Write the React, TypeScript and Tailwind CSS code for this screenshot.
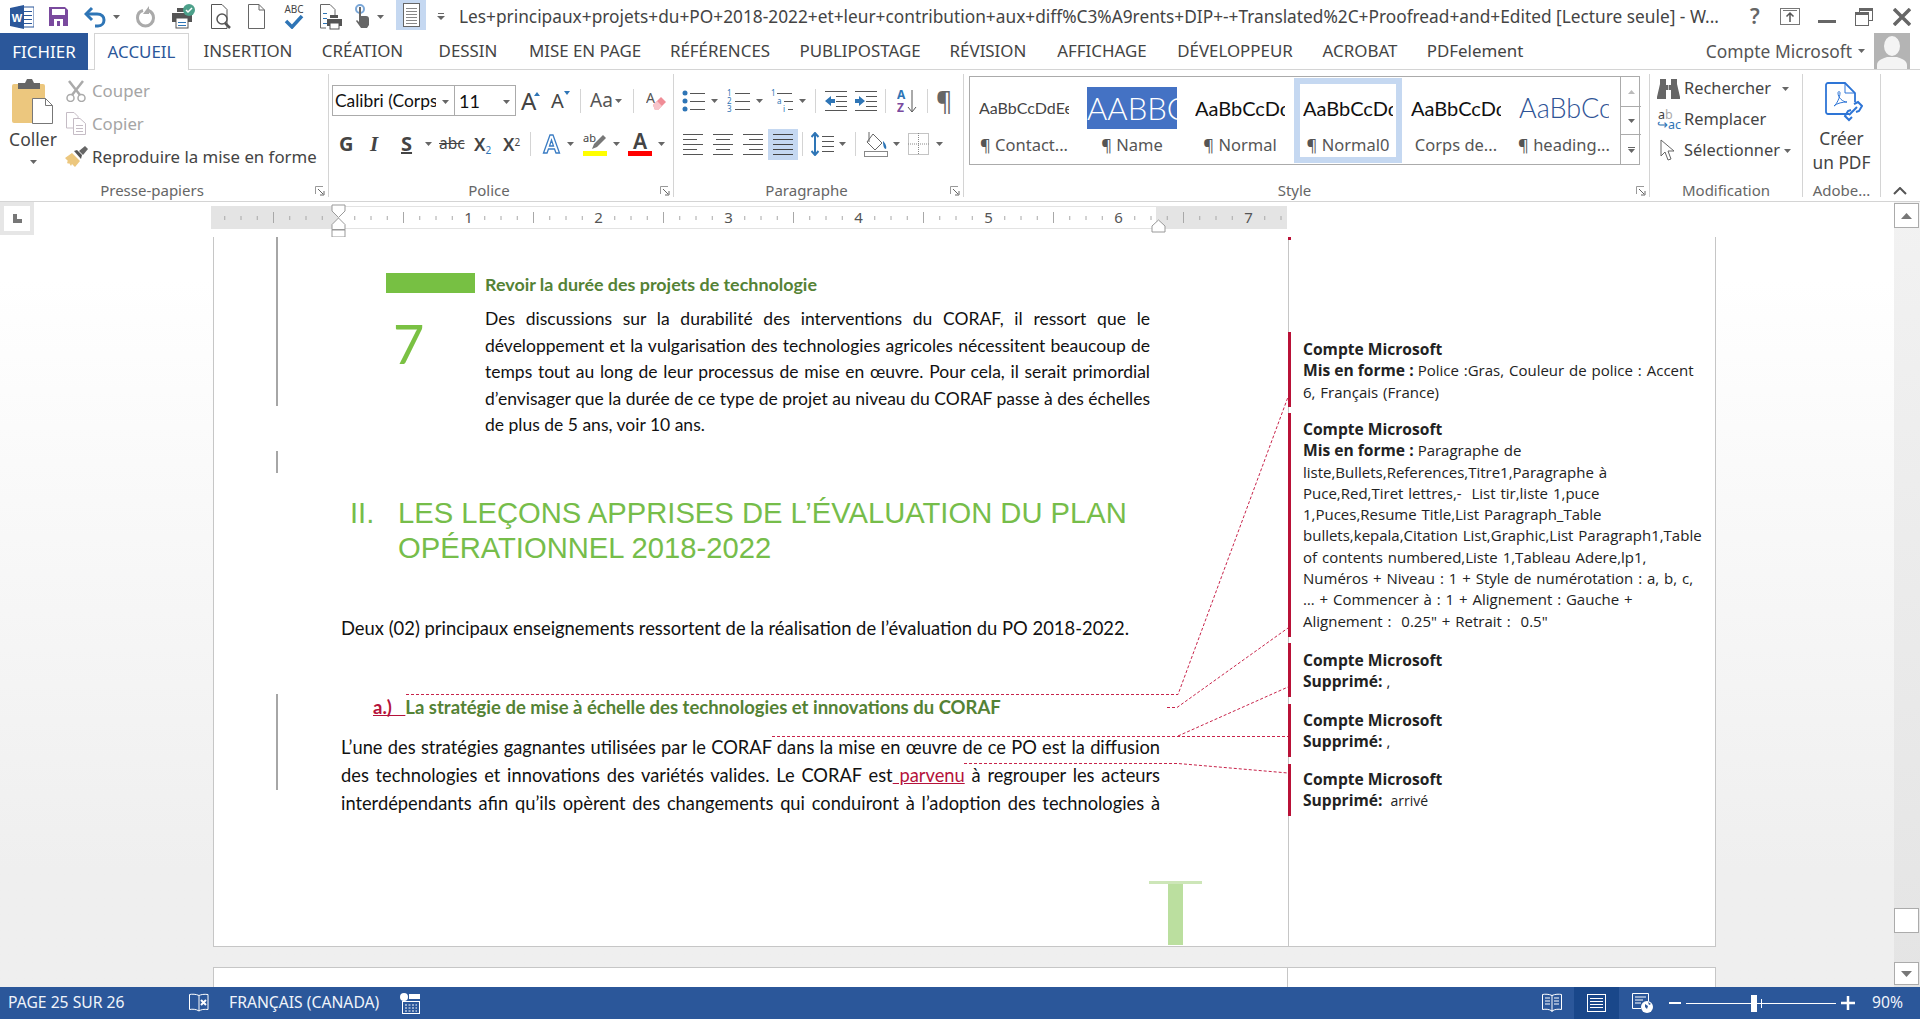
import React from "react";

const Caret = ({ c = "" }: { c?: string }) => (
  <svg width="7" height="4" viewBox="0 0 7 4" className={`shrink-0 ${c}`}><path d="M0 0h7L3.5 4z" fill="#666" /></svg>
);

const Launcher = () => (
  <svg width="10" height="10" viewBox="0 0 10 10" className="absolute right-[3px] bottom-[1px]">
    <path d="M.5 8V.5H8" fill="none" stroke="#999" />
    <path d="M3 3l5 5M9 5v4H5" fill="none" stroke="#666" />
  </svg>
);

const Tab = ({ t, c }: { t: string; c: string }) => (
  <div className={`flex items-center justify-center h-[36px] text-[#444] ${c}`}>{t}</div>
);

const Lines = ({ n, x, w, y0 = 0, gap = 5, color = "#444", sw = 1 }: { n: number; x: number; w: number; y0?: number; gap?: number; color?: string; sw?: number }) => (
  <g stroke={color} strokeWidth={sw}>
    {Array.from({ length: n }).map((_, i) => (
      <line key={i} x1={x} x2={x + w} y1={y0 + i * gap + 0.5} y2={y0 + i * gap + 0.5} />
    ))}
  </g>
);

const GroupLabel = ({ t, launcher = true }: { t: string; launcher?: boolean }) => (
  <div className={`relative h-[14px] flex items-center justify-center text-[#666] text-[15px] ${launcher ? "pr-[24px]" : ""}`}>
    {t}
    {launcher && <Launcher />}
  </div>
);

const Style = ({ sample, label, sel, sc = "" }: { sample: string; label: string; sel?: boolean; sc?: string }) => (
  <div className="relative w-[108px] h-full flex flex-col items-center shrink-0">
    <div className={`mt-[10px] h-[42px] w-[90px] overflow-hidden whitespace-nowrap flex items-center font-['Lato',sans-serif] ${sc}`}>{sample}</div>
    <div className="mt-[5px] h-[22px] flex items-center text-[16.5px] text-[#555] whitespace-nowrap">{label}</div>
    {sel && <div className="absolute inset-x-0 top-[1px] bottom-[1px] border-[6px] border-[#c5d8f1]" />}
  </div>
);

const J = ({ children }: { children: React.ReactNode }) => (
  <div className="text-justify [text-align-last:justify]">{children}</div>
);

const Comment = ({ lines, c }: { lines: React.ReactNode[]; c: string }) => (
  <div className={`-ml-px border-l-[3px] border-[#b91137] pl-[12px] text-[15px] leading-[21.3px] text-[#222] whitespace-pre [word-spacing:1px] [&_b]:text-[15.6px] [&_b]:[word-spacing:0] ${c}`}>
    {lines.map((l, i) => <div key={i}>{l}</div>)}
  </div>
);

const Ruler = () => {
  const ticks = Array.from({ length: 66 }).map((_, i) => i - 7);
  return (
    <svg width="1076" height="23" className="block overflow-visible">
      <rect x="0" y="0" width="1076" height="23" fill="#fff" />
      <rect x="0" y="0" width="1076" height="1" fill="#e3e3e3" />
      <rect x="0" y="22" width="1076" height="1" fill="#e3e3e3" />
      <rect x="0" y="0" width="127" height="23" fill="#e4e4e4" />
      <rect x="945" y="0" width="131" height="23" fill="#e4e4e4" />
      {ticks.map((i) => {
        const x = 127.5 + i * 16.25;
        if (i % 8 === 0) return null;
        if (x < 4 || x > 1072) return null;
        const big = i % 4 === 0;
        return <line key={i} x1={x} x2={x} y1={big ? 6 : 10} y2={big ? 17 : 14} stroke="#a8a8a8" strokeWidth="1" />;
      })}
      {[1, 2, 3, 4, 5, 6, 7].map((n) => (
        <text key={n} x={127.5 + n * 130} y="17" textAnchor="middle" fontSize="15" fill="#555" fontFamily="Noto Sans, sans-serif">{n}</text>
      ))}
      <path d="M121 -1h13v6l-6.5 6.5L121 5z" fill="#fff" stroke="#999" />
      <path d="M127.500 12l6.500 6.500v5h-13v-5z" fill="#fff" stroke="#999" />
      <rect x="121" y="24" width="13" height="7" fill="#fff" stroke="#999" />
      <path d="M941 26v-6l6.500-6 6.500 6v6z" fill="#fff" stroke="#999" />
    </svg>
  );
};

const commentA = [
  <b key="a">Compte Microsoft</b>,
  <><b>Mis en forme : </b>Police :Gras, Couleur de police : Accent</>,
  "6, Français (France)",
];
const commentB = [
  <b key="a">Compte Microsoft</b>,
  <><b>Mis en forme : </b>Paragraphe de</>,
  "liste,Bullets,References,Titre1,Paragraphe à",
  "Puce,Red,Tiret lettres,-  List tir,liste 1,puce",
  "1,Puces,Resume Title,List Paragraph_Table",
  "bullets,kepala,Citation List,Graphic,List Paragraph1,Table",
  "of contents numbered,Liste 1,Tableau Adere,lp1,",
  "Numéros + Niveau : 1 + Style de numérotation : a, b, c,",
  "… + Commencer à : 1 + Alignement : Gauche +",
  "Alignement :  0.25\" + Retrait :  0.5\"",
];

export default function App() {
  return (
    <div className="w-[1920px] h-[1019px] overflow-hidden flex flex-col bg-white font-['Noto_Sans',sans-serif]">
      {/* Title bar */}
      <div className="h-[33px] shrink-0 flex items-center pl-[10px] text-[#444]">
        <svg width="24" height="24" viewBox="0 0 24 24" className="shrink-0">
          <rect x="9" y="2" width="15" height="20" fill="#fff" stroke="#2b579a" />
          <Lines n={4} x={14} w={8} y0={6} gap={4} color="#2b579a" />
          <path d="M0 3l14-3v24L0 21z" fill="#2b579a" />
          <text x="7" y="16.500" textAnchor="middle" fontSize="11" fontWeight="700" fill="#fff" fontFamily="Liberation Sans, sans-serif">W</text>
        </svg>
        <svg width="19" height="19" viewBox="0 0 19 19" className="ml-[15px] shrink-0">
          <path d="M0 0h16l3 3v16H0z" fill="#7a4a9e" />
          <rect x="3" y="2" width="13" height="6" fill="#fff" />
          <rect x="5" y="12" width="9" height="7" fill="#fff" />
          <rect x="8" y="14" width="3" height="5" fill="#7a4a9e" />
        </svg>
        <svg width="22" height="22" viewBox="0 0 22 22" className="ml-[16px] shrink-0">
          <path d="M8 2L2 8l6 6" fill="none" stroke="#2e75b6" strokeWidth="3" />
          <path d="M3 8h10c5 0 7 3 7 6s-2 6-6 6h-3" fill="none" stroke="#2e75b6" strokeWidth="3" />
        </svg>
        <Caret c="ml-[7px]" />
        <svg width="19" height="22" viewBox="0 0 19 22" className="ml-[16px] shrink-0">
          <path d="M7 4.500C3 5.500 1.500 9 1.500 12a8 8 0 0 0 16 0c0-3-1.500-6-5-7.500" fill="none" stroke="#aaa" strokeWidth="3" />
          <path d="M13 0v8h-6z" fill="#aaa" />
        </svg>
        <svg width="23" height="26" viewBox="0 0 23 26" className="ml-[17px] shrink-0">
          <path d="M5 8V4h10v4M0 9h20v9H0z" fill="#555" />
          <rect x="4" y="14" width="12" height="10" fill="#fff" stroke="#555" />
          <circle cx="17" cy="6" r="6" fill="#4ca08a" />
          <path d="M14 6l2 2 4-4" stroke="#fff" fill="none" strokeWidth="1.500" />
          <Lines n={2} x={6} w={8} y0={18} gap={3} color="#2e75b6" />
        </svg>
        <svg width="20" height="26" viewBox="0 0 20 26" className="ml-[16px] shrink-0">
          <path d="M.5.500H11l5 5v19H.5z" fill="#fff" stroke="#555" />
          <circle cx="11" cy="15" r="5" fill="#fff" stroke="#555" strokeWidth="1.500" />
          <path d="M14 19l5 5" stroke="#555" strokeWidth="2.500" />
        </svg>
        <svg width="17" height="25" viewBox="0 0 17 25" className="ml-[17px] shrink-0">
          <path d="M.5.500H11l5.500 5.500v18.500H.5z" fill="#fff" stroke="#666" />
          <path d="M11 .5v5.500h5.500" fill="none" stroke="#666" />
        </svg>
        <div className="ml-[19px] w-[20px] h-[26px] flex flex-col items-center shrink-0">
          <span className="text-[10px] leading-[11px] text-[#444]">ABC</span>
          <svg width="20" height="14" viewBox="0 0 20 14"><path d="M2 6l6 6L18 1" fill="none" stroke="#2e75b6" strokeWidth="3.500" /></svg>
        </div>
        <svg width="22" height="26" viewBox="0 0 22 26" className="ml-[16px] shrink-0">
          <path d="M.5.500H10l5 5V12M.5.500V24H6" fill="#fff" stroke="#666" />
          <Lines n={3} x={3} w={4} y0={9} gap={5} color="#2e75b6" />
          <path d="M10 14V11h8v3M7 15h15v7H7z" fill="#555" />
          <rect x="10" y="19" width="9" height="6" fill="#fff" stroke="#555" />
        </svg>
        <svg width="16" height="26" viewBox="0 0 16 26" className="ml-[12px] shrink-0">
          <circle cx="6" cy="5" r="4" fill="none" stroke="#7aa7d8" strokeWidth="2" />
          <path d="M5 3h2v9h5c2 0 3 1 3 3v6l-2 3H7l-5-7 1-1 2 2z" fill="#666" />
        </svg>
        <Caret c="ml-[7px]" />
        <div className="ml-[12px] w-[30px] h-[30px] self-start flex items-center justify-center bg-[#c5d8f1] shrink-0">
          <svg width="17" height="24" viewBox="0 0 17 24">
            <rect x=".5" y=".5" width="16" height="23" fill="#fff" stroke="#666" />
            <Lines n={6} x={3} w={11} y0={5} gap={3} color="#888" />
          </svg>
        </div>
        <svg width="8" height="8" viewBox="0 0 8 8" className="ml-[11px] shrink-0"><path d="M1 .5h6" stroke="#666" /><path d="M0 3h8L4 7z" fill="#666" /></svg>
        <div className="ml-[14px] w-[1262px] shrink-0 whitespace-nowrap text-[17.3px] text-[#444]">
          Les+principaux+projets+du+PO+2018-2022+et+leur+contribution+aux+diff%C3%A9rents+DIP+-+Translated%2C+Proofread+and+Edited [Lecture seule] - W...
        </div>
        <span className="ml-[29px] text-[21px] font-semibold text-[#666] leading-none">?</span>
        <svg width="20" height="17" viewBox="0 0 20 17" className="ml-[20px] shrink-0">
          <rect x=".5" y=".5" width="19" height="16" fill="none" stroke="#777" />
          <path d="M3 2.500h14" stroke="#777" />
          <path d="M10 5v9M6.500 8.500L10 5l3.500 3.500" fill="none" stroke="#555" strokeWidth="1.500" />
        </svg>
        <div className="ml-[18px] w-[18px] h-[3px] bg-[#666] mt-[10px] shrink-0" />
        <svg width="18" height="18" viewBox="0 0 18 18" className="ml-[19px] shrink-0">
          <rect x="4.500" y=".5" width="13" height="12" fill="none" stroke="#666" />
          <rect x=".5" y="4.500" width="13" height="13" fill="#fff" stroke="#666" />
          <rect x="0" y="4" width="14" height="3" fill="#666" />
          <rect x="4" y="0" width="14" height="3" fill="#666" />
        </svg>
        <svg width="18" height="18" viewBox="0 0 18 18" className="ml-[20px] shrink-0"><path d="M1 1l16 16M17 1L1 17" stroke="#666" strokeWidth="3.500" /></svg>
      </div>

      {/* Tabs */}
      <div className="h-[37px] shrink-0 flex border-b border-[#d4d4d4] text-[16.9px] whitespace-nowrap">
        <div className="w-[88px] h-[37px] mr-[6px] flex items-center justify-center bg-[#2b579a] text-white">FICHIER</div>
        <div className="w-[95px] h-[37px] flex items-center justify-center bg-white border border-b-0 border-[#d4d4d4] text-[#2b579a]">ACCUEIL</div>
        <Tab t="INSERTION" c="w-[118px]" />
        <Tab t="CRÉATION" c="w-[111px]" />
        <Tab t="DESSIN" c="w-[100px]" />
        <Tab t="MISE EN PAGE" c="w-[134px]" />
        <Tab t="RÉFÉRENCES" c="w-[136px]" />
        <Tab t="PUBLIPOSTAGE" c="w-[144px]" />
        <Tab t="RÉVISION" c="w-[112px]" />
        <Tab t="AFFICHAGE" c="w-[116px]" />
        <Tab t="DÉVELOPPEUR" c="w-[150px]" />
        <Tab t="ACROBAT" c="w-[100px]" />
        <Tab t="PDFelement" c="w-[130px]" />
        <div className="ml-auto flex items-center h-[36px] text-[17.4px] text-[#555]">
          Compte Microsoft
          <Caret c="ml-[6px]" />
          <div className="ml-[9px] mr-[10px] w-[36px] h-[36px] bg-[#b4b4b4] overflow-hidden shrink-0">
            <svg width="36" height="36" viewBox="0 0 36 36">
              <ellipse cx="18" cy="13" rx="8" ry="10" fill="#f4f4f4" />
              <path d="M3 36v-4c0-5 7-7 10-8h10c3 1 10 3 10 8v4z" fill="#f4f4f4" />
            </svg>
          </div>
        </div>
      </div>

      {/* Ribbon */}
      <div className="h-[132px] shrink-0 flex border-b border-[#d4d4d4] text-[#444]">
        {/* Clipboard */}
        <div className="w-[329px] h-[123px] mt-[4px] border-r border-[#d4d4d4] flex flex-col shrink-0">
          <div className="h-[100px] flex">
            <div className="w-[66px] flex flex-col items-center shrink-0">
              <svg width="42" height="45" viewBox="0 0 42 45" className="mt-[5px]">
                <rect x="0" y="5" width="33" height="39" rx="2" fill="#ecc77e" />
                <path d="M6 4h7l2-4h5l2 4h6v6H6z" fill="#666" />
                <path d="M20.500 19.500h13l7 7v18h-20z" fill="#fff" stroke="#777" />
                <path d="M33.500 19.500v7h7" fill="none" stroke="#777" />
              </svg>
              <div className="mt-[4px] text-[17.5px] leading-[22px] text-[#444]">Coller</div>
              <Caret c="mt-[10px]" />
            </div>
            <div className="flex flex-col">
              <div className="h-[33px] flex items-center text-[16.8px] text-[#a5a5a5]">
                <svg width="20" height="22" viewBox="0 0 20 22" className="w-[20px] mr-[6px]">
                  <path d="M3 1l11 14M17 1L6 15" stroke="#aaa" strokeWidth="2.500" />
                  <circle cx="4.500" cy="18" r="3.500" fill="#fff" stroke="#aaa" strokeWidth="1.500" />
                  <circle cx="15.500" cy="18" r="3.500" fill="#fff" stroke="#aaa" strokeWidth="1.500" />
                </svg>
                Couper
              </div>
              <div className="h-[33px] flex items-center text-[16.8px] text-[#a5a5a5]">
                <svg width="20" height="23" viewBox="0 0 20 23" className="w-[20px] mr-[6px]">
                  <path d="M.5.500H8l4 4V16H.5z" fill="#fff" stroke="#c5bcc5" />
                  <path d="M7.500 6.500H14l5.500 5v11h-12z" fill="#fff" stroke="#c5bcc5" />
                  <Lines n={3} x={10} w={7} y0={13} gap={3} color="#c5bcc5" />
                </svg>
                Copier
              </div>
              <div className="h-[33px] flex items-center text-[16.8px] text-[#444] whitespace-nowrap">
                <svg width="23" height="21" viewBox="0 0 23 21" className="w-[23px] mr-[4px] -ml-px">
                  <path d="M0 12l7-5 8 8-5 6-3-3-1 2-2-3-1 1-1-2 1-1z" fill="#ecc77e" />
                  <path d="M9 5l3-1 5 5-1 4z" fill="#555" />
                  <path d="M14 5l6-5 3 3-5 6z" fill="#666" />
                </svg>
                Reproduire la mise en forme
              </div>
            </div>
          </div>
          <div className="mt-auto"><GroupLabel t="Presse-papiers" /></div>
        </div>

        {/* Font */}
        <div className="w-[345px] h-[123px] mt-[4px] border-r border-[#d4d4d4] flex flex-col shrink-0">
          <div className="mt-[11px] h-[31px] flex items-center pl-[3px]">
            <div className="w-[123px] h-[31px] border border-[#ababab] flex items-center pl-[2px] pr-[5px] pt-[2px] text-[17.4px] text-[#111] shrink-0">
              <span className="w-[101px] overflow-hidden whitespace-nowrap font-['Lato',sans-serif]">Calibri (Corps</span>
              <Caret c="ml-auto" />
            </div>
            <div className="w-[61px] h-[31px] border border-l-0 border-[#ababab] flex items-center pl-[4px] pr-[5px] pt-[2px] text-[18px] text-[#111] shrink-0 font-['Lato',sans-serif]">
              11<Caret c="ml-auto" />
            </div>
            <div className="ml-[5px] w-[19px] relative text-[24px] leading-none text-[#444] shrink-0">A<svg width="6" height="4" className="absolute right-0 top-[3px]"><path d="M0 4h6L3 0z" fill="#2e75b6" /></svg></div>
            <div className="ml-[11px] w-[19px] relative text-[20px] leading-none text-[#444] shrink-0">A<svg width="6" height="4" className="absolute right-0 top-[0px]"><path d="M0 0h6L3 4z" fill="#2e75b6" /></svg></div>
            <div className="ml-[10px] w-px h-[24px] bg-[#d4d4d4]" />
            <div className="ml-[9px] text-[19px] text-[#555] leading-none">Aa</div>
            <Caret c="ml-[2px]" />
            <div className="ml-[11px] w-px h-[24px] bg-[#d4d4d4]" />
            <svg width="20" height="24" viewBox="0 0 20 24" className="ml-[12px] shrink-0">
              <text x="0" y="14" fontSize="14" fill="#555" fontFamily="Noto Sans, sans-serif">A</text>
              <path d="M7 16l8-8 5 5-8 8H9z" fill="#f08c96" />
              <path d="M7 16l4-4 5 5-4 4H9z" fill="#f7c4ca" />
            </svg>
          </div>
          <div className="mt-[12px] h-[32px] flex items-center pl-[10px] text-[#444]">
            <span className="w-[15px] text-[20px] font-bold leading-none shrink-0">G</span>
            <span className="ml-[16px] w-[12px] text-[21px] font-bold italic leading-none font-['Liberation_Serif',serif] shrink-0">I</span>
            <span className="ml-[19px] w-[12px] text-[20px] font-bold underline leading-none shrink-0">S</span>
            <Caret c="ml-[12px]" />
            <span className="ml-[7px] w-[24px] text-[15.5px] line-through leading-none shrink-0">abc</span>
            <span className="ml-[11px] w-[18px] text-[18px] font-semibold leading-none shrink-0 whitespace-nowrap">X<sub className="text-[10px] text-[#2e75b6] font-normal">2</sub></span>
            <span className="ml-[11px] w-[19px] text-[18px] font-semibold leading-none shrink-0 whitespace-nowrap">X<sup className="text-[10px] font-normal">2</sup></span>
            <div className="ml-[8px] w-px h-[24px] bg-[#d4d4d4]" />
            <svg width="19" height="22" viewBox="0 0 19 22" className="ml-[11px] shrink-0">
              <path d="M1.500 20L8 2h3l6.500 18h-3.500l-1.500-4H6.500L5 20zM7.500 13h4L9.500 7z" fill="#fff" stroke="#3a7cc3" strokeWidth="1.300" />
            </svg>
            <Caret c="ml-[6px]" />
            <div className="ml-[9px] w-[24px] flex flex-col shrink-0">
              <svg width="24" height="18" viewBox="0 0 24 18">
                <text x="0" y="10" fontSize="11" fill="#444" fontFamily="Noto Sans, sans-serif">ab</text>
                <path d="M9 17l2-5 9-9 3 3-9 9z" fill="#777" />
              </svg>
              <div className="h-[5px] w-[24px] bg-[#ffff00] mt-[1px]" />
            </div>
            <Caret c="ml-[6px]" />
            <div className="ml-[8px] w-[24px] flex flex-col items-center shrink-0">
              <span className="text-[21px] font-semibold leading-[18px] text-[#444]">A</span>
              <div className="h-[5px] w-[24px] bg-[#ff0000] mt-[1px]" />
            </div>
            <Caret c="ml-[6px]" />
          </div>
          <div className="mt-auto"><GroupLabel t="Police" /></div>
        </div>

        {/* Paragraph */}
        <div className="w-[290px] h-[123px] mt-[4px] border-r border-[#d4d4d4] flex flex-col shrink-0">
          <div className="mt-[11px] h-[31px] flex items-center pl-[8px]">
            <svg width="23" height="24" viewBox="0 0 23 24" className="shrink-0">
              <circle cx="3" cy="4" r="2.500" fill="#2e75b6" /><circle cx="3" cy="12" r="2.500" fill="#2e75b6" /><circle cx="3" cy="20" r="2.500" fill="#2e75b6" />
              <Lines n={3} x={8} w={15} y0={4} gap={8} color="#555" />
            </svg>
            <Caret c="ml-[6px]" />
            <svg width="23" height="24" viewBox="0 0 23 24" className="ml-[9px] shrink-0">
              <text x="0" y="7" fontSize="8" fill="#2e75b6">1</text><text x="0" y="15" fontSize="8" fill="#2e75b6">2</text><text x="0" y="23" fontSize="8" fill="#2e75b6">3</text>
              <Lines n={3} x={8} w={15} y0={4} gap={8} color="#555" />
            </svg>
            <Caret c="ml-[6px]" />
            <svg width="23" height="24" viewBox="0 0 23 24" className="ml-[8px] shrink-0">
              <text x="0" y="7" fontSize="8" fill="#2e75b6">1</text><text x="6" y="15" fontSize="8" fill="#2e75b6">a</text><text x="12" y="23" fontSize="8" fill="#2e75b6">i</text>
              <path d="M6 4.500h15M13 12.500h9M17 20.500h5" stroke="#555" />
            </svg>
            <Caret c="ml-[5px]" />
            <div className="ml-[9px] w-px h-[24px] bg-[#d4d4d4]" />
            <svg width="22" height="22" viewBox="0 0 22 22" className="ml-[9px] shrink-0">
              <Lines n={2} x={0} w={22} y0={1} gap={19} color="#555" />
              <Lines n={3} x={11} w={11} y0={6} gap={5} color="#555" />
              <path d="M0 11l6-5v3h4v4H6v3z" fill="#2e75b6" />
            </svg>
            <svg width="22" height="22" viewBox="0 0 22 22" className="ml-[8px] shrink-0">
              <Lines n={2} x={0} w={22} y0={1} gap={19} color="#555" />
              <Lines n={3} x={11} w={11} y0={6} gap={5} color="#555" />
              <path d="M10 11L4 6v3H0v4h4v3z" fill="#2e75b6" />
            </svg>
            <div className="ml-[8px] w-px h-[24px] bg-[#d4d4d4]" />
            <svg width="20" height="26" viewBox="0 0 20 26" className="ml-[11px] shrink-0">
              <text x="0" y="11" fontSize="12" fontWeight="700" fill="#2e75b6" fontFamily="Noto Sans, sans-serif">A</text>
              <text x="0" y="24" fontSize="12" fontWeight="700" fill="#7a4a9e" fontFamily="Noto Sans, sans-serif">Z</text>
              <path d="M15 2v21M11 19l4 5 4-5" fill="none" stroke="#555" />
            </svg>
            <div className="ml-[10px] w-px h-[24px] bg-[#d4d4d4]" />
            <span className="ml-[8px] w-[18px] text-[25px] leading-none text-[#666] shrink-0">¶</span>
          </div>
          <div className="mt-[12px] h-[32px] flex items-center pl-[9px]">
            <svg width="20" height="22" viewBox="0 0 20 22" className="shrink-0"><path d="M0 1.500h20M0 6.500h14M0 11.500h20M0 16.500h14M0 21.500h20" stroke="#555" /></svg>
            <svg width="20" height="22" viewBox="0 0 20 22" className="ml-[10px] shrink-0"><path d="M0 1.500h20M3 6.500h14M0 11.500h20M3 16.500h14M0 21.500h20" stroke="#555" /></svg>
            <svg width="20" height="22" viewBox="0 0 20 22" className="ml-[10px] shrink-0"><path d="M0 1.500h20M6 6.500h14M0 11.500h20M6 16.500h14M0 21.500h20" stroke="#555" /></svg>
            <div className="ml-[5px] w-[30px] h-[31px] bg-[#c5d8f1] flex items-center justify-center shrink-0">
              <svg width="20" height="22" viewBox="0 0 20 22"><path d="M0 1.500h20M0 6.500h20M0 11.500h20M0 16.500h20M0 21.500h20" stroke="#444" /></svg>
            </div>
            <div className="ml-[4px] w-px h-[24px] bg-[#d4d4d4]" />
            <svg width="23" height="24" viewBox="0 0 23 24" className="ml-[8px] shrink-0">
              <path d="M4 1v22M.5 5L4 1l3.500 4M.5 19L4 23l3.500-4" fill="none" stroke="#2e75b6" strokeWidth="2" />
              <Lines n={4} x={11} w={12} y0={4} gap={5} color="#555" />
            </svg>
            <Caret c="ml-[5px]" />
            <div className="ml-[9px] w-px h-[24px] bg-[#d4d4d4]" />
            <svg width="24" height="26" viewBox="0 0 24 26" className="ml-[8px] shrink-0">
              <path d="M9 3l9 9-7 7-8-8z" fill="#fff" stroke="#666" />
              <path d="M5 1v10" stroke="#666" />
              <path d="M19 10c2 2 4 5 3 8-2 0-3-3-3-8z" fill="#2e75b6" />
              <rect x=".5" y="20.500" width="23" height="5" fill="#fff" stroke="#888" />
            </svg>
            <Caret c="ml-[5px]" />
            <svg width="21" height="22" viewBox="0 0 21 22" className="ml-[8px] shrink-0">
              <rect x=".5" y=".5" width="20" height="21" fill="none" stroke="#888" strokeDasharray="1 1" />
              <path d="M10.500 0v22M0 11h21" stroke="#888" strokeDasharray="1 1" />
            </svg>
            <Caret c="ml-[7px]" />
          </div>
          <div className="mt-auto"><GroupLabel t="Paragraphe" /></div>
        </div>

        {/* Styles */}
        <div className="w-[686px] h-[123px] mt-[4px] border-r border-[#d4d4d4] flex flex-col shrink-0">
          <div className="ml-[5px] mt-[2px] w-[671px] h-[89px] border border-[#ababab] flex shrink-0">
            <Style sample="AaBbCcDdEe" label="¶ Contact..." sc="text-[16px] text-[#444]" />
            <div className="relative w-[108px] h-full flex flex-col items-center shrink-0">
              <div className="mt-[10px] h-[42px] w-[90px] overflow-hidden whitespace-nowrap flex items-center justify-start bg-[#4472c4] text-white text-[31px] font-['Lato',sans-serif] font-light">AABBCC</div>
              <div className="mt-[5px] h-[22px] flex items-center text-[16.5px] text-[#555]">¶ Name</div>
            </div>
            <Style sample="AaBbCcDdEe" label="¶ Normal" sc="text-[20px] text-[#111]" />
            <Style sample="AaBbCcDdEe" label="¶ Normal0" sel sc="text-[20px] text-[#111]" />
            <Style sample="AaBbCcDdEe" label="Corps de..." sc="text-[20px] text-[#111]" />
            <Style sample="AaBbCcDdEe" label="¶ heading..." sc="text-[27px] font-light text-[#2f5496]" />
            <div className="ml-[2px] w-[21px] h-full border-l border-[#ababab] flex flex-col shrink-0">
              <div className="h-[30px] border-b border-[#ababab] flex items-center justify-center"><svg width="7" height="4"><path d="M0 4h7L3.500 0z" fill="#bbb" /></svg></div>
              <div className="h-[28px] border-b border-[#ababab] flex items-center justify-center"><Caret /></div>
              <div className="flex-1 flex flex-col items-center justify-center gap-[1px]"><div className="w-[7px] h-px bg-[#666]" /><Caret /></div>
            </div>
          </div>
          <div className="mt-auto"><GroupLabel t="Style" /></div>
        </div>

        {/* Find */}
        <div className="w-[153px] h-[123px] mt-[4px] border-r border-[#d4d4d4] flex flex-col shrink-0 pl-[7px] text-[16.4px] text-[#444] whitespace-nowrap">
          <div className="-mt-[1px] h-[31px] flex items-center">
            <svg width="23" height="21" viewBox="0 0 23 21" className="mr-[4px] shrink-0">
              <path d="M3 1h6v6h5V1h6v5l3 13v2h-9v-9h-5v9H0v-2L3 6z" fill="#666" />
              <path d="M11.500 0v21" stroke="#fff" strokeWidth=".6" />
            </svg>
            Rechercher<Caret c="ml-[11px]" />
          </div>
          <div className="h-[31px] flex items-center">
            <div className="w-[23px] mr-[4px] leading-[10px] text-[12.5px] shrink-0">
              <div className="pl-[1px]">a<span className="text-[#aaa]">b</span></div>
              <div className="text-[#2e75b6]">↪ac</div>
            </div>
            Remplacer
          </div>
          <div className="h-[31px] flex items-center">
            <svg width="18" height="23" viewBox="0 0 18 23" className="ml-[3px] mr-[6px] shrink-0">
              <path d="M1 1v16l4-4 3 8 3-1-3-8h6z" fill="#fff" stroke="#666" />
            </svg>
            Sélectionner<Caret c="ml-[4px]" />
          </div>
          <div className="mt-auto -ml-[7px]"><GroupLabel t="Modification" launcher={false} /></div>
        </div>

        {/* Adobe */}
        <div className="w-[78px] h-[123px] mt-[4px] border-r border-[#d4d4d4] flex flex-col items-center shrink-0 text-[17.3px] text-[#444]">
          <svg width="38" height="43" viewBox="0 0 38 43" className="mt-[8px] shrink-0 ml-[5px]">
            <path d="M24 32H3a2 2 0 0 1-2-2V3a2 2 0 0 1 2-2h17l10 10v9" fill="none" stroke="#2e75d6" strokeWidth="1.800" />
            <path d="M20 1v10h10" fill="none" stroke="#2e75d6" strokeWidth="1" />
            <path d="M9 24c3-2 6-9 6-13 0-2-2-2-2 0 0 5 5 9 9 9-4 0-10 1-13 4z" fill="none" stroke="#2e75d6" strokeWidth="1" />
            <path d="M29 22l4-2 4 4-3 5-3 1M27 35l-3 3-4-4 3-5 3-1M24 33l8-8" fill="none" stroke="#2e75d6" strokeWidth="2" />
          </svg>
          <div className="mt-[2px] leading-[24px]">Créer</div>
          <div className="leading-[24px]">un PDF</div>
          <div className="mt-auto"><GroupLabel t="Adobe..." launcher={false} /></div>
        </div>
        <div className="flex-1 flex items-end justify-center pb-[6px] pr-[2px]">
          <svg width="14" height="8" viewBox="0 0 14 8"><path d="M1 7l6-6 6 6" fill="none" stroke="#555" strokeWidth="2" /></svg>
        </div>
      </div>

      {/* Workspace */}
      <div className="flex-1 min-h-0 flex bg-gradient-to-b from-white from-10% to-[#efefef] to-85%">
        <div className="w-[1894px] shrink-0 flex flex-col overflow-hidden">
          {/* Ruler row */}
          <div className="h-[35px] shrink-0 flex">
            <div className="w-[34px] h-[33px] bg-[#e6e6e6] p-[4px] shrink-0">
              <div className="w-full h-full bg-white flex items-center justify-center">
                <div className="w-[9px] h-[9px] border-l-[4px] border-b-[4px] border-[#777]" />
              </div>
            </div>
            <div className="ml-[177px] mt-[4px]"><Ruler /></div>
          </div>
          {/* Page */}
          <div className="relative ml-[213px] w-[1503px] h-[710px] shrink-0 bg-white border-x border-b border-[#c6c6c6] flex">
            <div className="w-[1074px] shrink-0 flex flex-col text-[#111] font-['Lato',sans-serif] text-[18.4px]">
              <div className="pt-[36px] pl-[172px] flex">
                <div className="w-[89px] shrink-0">
                  <div className="h-[20px] bg-[#77c043]" />
                  <div className="mt-[16px] ml-[7px] text-[54px] leading-[70px] text-[#7ac143] font-normal">7</div>
                </div>
                <div className="ml-[10px] w-[665px] shrink-0">
                  <div className="-mt-px h-[24px] leading-[24px] text-[17.9px] font-bold text-[#548235] whitespace-nowrap">Revoir la durée des projets de technologie</div>
                  <div className="mt-[10px] leading-[26.5px] text-[17.5px] [word-spacing:-1px]">
                    <J>Des discussions sur la durabilité des interventions du CORAF, il ressort que le</J>
                    <J>développement et la vulgarisation des technologies agricoles nécessitent beaucoup de</J>
                    <J>temps tout au long de leur processus de mise en œuvre. Pour cela, il serait primordial</J>
                    <J>d’envisager que la durée de ce type de projet au niveau du CORAF  passe  à des échelles</J>
                    <div className="[word-spacing:0]">de plus de 5 ans, voir 10 ans.</div>
                  </div>
                </div>
              </div>
              <div className="mt-[57px] pl-[136px] flex text-[29.2px] leading-[35px] text-[#76bd4a] font-['Liberation_Sans',sans-serif]">
                <div className="w-[48px] shrink-0">II.</div>
                <div className="whitespace-nowrap">
                  <div>LES LEÇONS APPRISES DE L’ÉVALUATION DU PLAN</div>
                  <div>OPÉRATIONNEL 2018-2022</div>
                </div>
              </div>
              <div className="mt-[49px] pl-[127px] leading-[26px] whitespace-nowrap">Deux (02) principaux enseignements ressortent de la réalisation de l’évaluation du PO 2018-2022.</div>
              <div className="mt-[53px] pl-[159px] leading-[26px] text-[18.5px] font-bold whitespace-nowrap">
                <span className="text-[#b5123b] underline [text-decoration-skip-ink:none]">a.)&nbsp;&nbsp;&nbsp;</span><span className="text-[#548235]">La stratégie de mise à échelle des technologies et innovations du CORAF</span>
              </div>
              <div className="mt-[13px] ml-[127px] w-[819px] leading-[28px] text-[18.3px]">
                <J>L’une des stratégies gagnantes utilisées par le CORAF dans la mise en œuvre de ce PO est la diffusion</J>
                <J>des technologies et innovations des variétés valides. Le CORAF est<span className="text-[#b5123b] underline"> parvenu</span>  à regrouper les acteurs</J>
                <J>interdépendants afin qu’ils opèrent des changements qui  conduiront à l’adoption des technologies à</J>
              </div>
              <div className="mt-auto mb-[1px] ml-[935px] w-[53px] h-[64px] flex flex-col items-center shrink-0">
                <div className="w-full h-[3px] bg-[#cde6b8]" />
                <div className="w-[15px] flex-1 bg-[#bbdf9f]" />
              </div>
            </div>
            {/* Comments */}
            <div className="flex-1 border-l border-[#c6c6c6] font-['Open_Sans',sans-serif]">
              <div className="-ml-px w-[3px] h-[3px] bg-[#b91137]" />
              <Comment lines={commentA} c="mt-[92px] h-[75px] pt-[7px]" />
              <Comment lines={commentB} c="mt-[6px] h-[224px] pt-[6px]" />
              <Comment lines={[<b key="a">Compte Microsoft</b>, <><b>Supprimé: </b>,</>]} c="mt-[6px] h-[54px] pt-[7px]" />
              <Comment lines={[<b key="a">Compte Microsoft</b>, <><b>Supprimé: </b>,</>]} c="mt-[7px] h-[53px] pt-[6px]" />
              <Comment lines={[<b key="a">Compte Microsoft</b>, <><b>Supprimé:&nbsp;&nbsp;</b><span className="text-[14px]">arrivé</span></>]} c="mt-[7px] h-[52px] pt-[5px]" />
            </div>
            <svg className="absolute left-0 top-0 w-full h-full pointer-events-none" fill="none" stroke="#c8234a" strokeDasharray="3 2">
              <polyline points="192,457.500 964,457.500 1074,160" />
              <polyline points="953,470.500 963,470.500 1074,391" />
              <polyline points="558,499.500 1074,499.500" />
              <polyline points="964,499 1074,450" />
              <polyline points="750,526.500 964,526.500 1074,536" />
            </svg>
            <div className="absolute left-[62px] top-0 w-[2px] h-[169px] bg-[#a6a6a6]" />
            <div className="absolute left-[62px] top-[214px] w-[2px] h-[22px] bg-[#a6a6a6]" />
            <div className="absolute left-[62px] top-[457px] w-[2px] h-[96px] bg-[#a6a6a6]" />
          </div>
          <div className="mt-[20px] ml-[213px] w-[1503px] flex-1 bg-white border-x border-t border-[#c6c6c6] flex">
            <div className="w-[1074px] border-r border-[#c6c6c6]" />
          </div>
        </div>
        {/* Scrollbar */}
        <div className="w-[26px] shrink-0 flex flex-col bg-gradient-to-b from-[#f2f2f2] to-[#e4e4e4]">
          <div className="mt-[1px] w-[25px] h-[25px] shrink-0 bg-white border border-[#ababab] flex items-center justify-center">
            <svg width="11" height="6"><path d="M0 6h11L5.500 0z" fill="#777" /></svg>
          </div>
          <div className="mt-[680px] w-[25px] h-[25px] shrink-0 bg-white border border-[#ababab]" />
          <div className="mt-[29px] w-[25px] h-[23px] shrink-0 bg-white border border-[#ababab] flex items-center justify-center">
            <svg width="11" height="6"><path d="M0 0h11L5.500 6z" fill="#777" /></svg>
          </div>
        </div>
      </div>

      {/* Status bar */}
      <div className="h-[32px] shrink-0 bg-[#2b579a] flex items-center text-[#f0f4fa] text-[15.7px] whitespace-nowrap">
        <span className="ml-[8px] w-[116px]">PAGE 25 SUR 26</span>
        <svg width="21" height="20" viewBox="0 0 21 20" className="ml-[65px] shrink-0">
          <path d="M10 2.500C7 1 3 1 .5 1.500v15c3-.5 6.500-.5 9.500 1.500V2.500zM10 2.500c2-1 5-1.500 9-1v15c-4-.5-7 0-9 1.500" fill="none" stroke="#fff" />
          <path d="M12 7l5 5M17 7l-5 5" stroke="#fff" strokeWidth="2" />
        </svg>
        <span className="ml-[19px] w-[150px]">FRANÇAIS (CANADA)</span>
        <svg width="20" height="22" viewBox="0 0 20 22" className="ml-[21px] shrink-0">
          <circle cx="4" cy="5" r="4" fill="#fff" />
          <rect x="9" y="2" width="11" height="5" fill="#fff" />
          <rect x="2.500" y="9.500" width="17" height="12" fill="none" stroke="#fff" />
          <path d="M5 13h12M5 16h12M5 19h12" stroke="#fff" strokeDasharray="2 1.500" />
        </svg>
        <div className="ml-auto flex items-center h-full">
          <svg width="20" height="20" viewBox="0 0 20 20" className="shrink-0">
            <path d="M10 2.500C7 1 3 1 .5 1.500v15c3-.5 6.500-.5 9.500 1.500 3-2 6.500-2 9.500-1.500v-15C17 1 13 1 10 2.500z" fill="none" stroke="#fff" />
            <path d="M3 5h5M3 8h5M3 11h5M12 5h5M12 8h5M12 11h5M10 2v17" stroke="#fff" />
          </svg>
          <div className="ml-[12px] w-[45px] h-full bg-[#19478a] flex items-center justify-center shrink-0">
            <svg width="19" height="18" viewBox="0 0 19 18"><rect x=".5" y=".5" width="18" height="17" fill="none" stroke="#fff" /><path d="M3 4.500h13M3 7.500h13M3 10.500h13M3 13.500h13" stroke="#fff" /></svg>
          </div>
          <svg width="21" height="20" viewBox="0 0 21 20" className="ml-[13px] shrink-0">
            <path d="M.5.500h16v8M.5.500v15H9" fill="none" stroke="#fff" />
            <path d="M3 4h11M3 7h8M3 10h6" stroke="#fff" />
            <circle cx="15" cy="14" r="6" fill="#fff" />
            <path d="M13 11l3 2-1 3-2-2zM16 9l3 2-2 1z" fill="#2b579a" />
          </svg>
          <div className="ml-[16px] w-[12px] h-[2px] bg-white shrink-0" />
          <div className="ml-[5px] w-[150px] h-px bg-white relative shrink-0">
            <div className="absolute left-[65px] top-[-8px] w-[6px] h-[17px] bg-white" />
            <div className="absolute left-[75px] top-[-4px] w-px h-[9px] bg-white" />
          </div>
          <svg width="14" height="14" viewBox="0 0 14 14" className="ml-[5px] shrink-0"><path d="M7 0v14M0 7h14" stroke="#fff" strokeWidth="2.500" /></svg>
          <span className="ml-[17px] w-[31px] mr-[17px] text-[15.7px]">90%</span>
        </div>
      </div>
    </div>
  );
}
